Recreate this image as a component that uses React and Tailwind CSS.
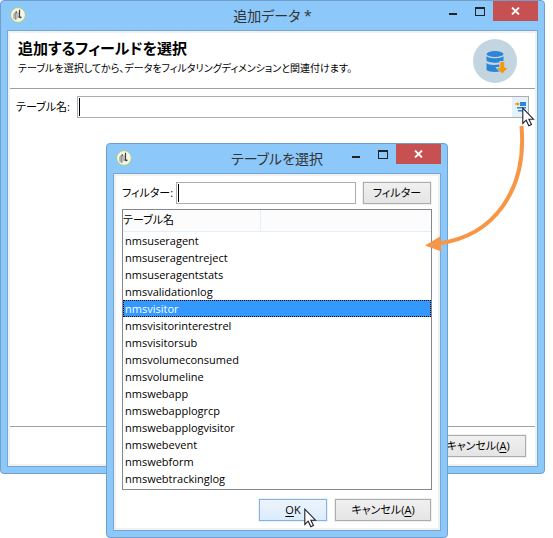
import React from "react";

const tables = [
  "nmsuseragent",
  "nmsuseragentreject",
  "nmsuseragentstats",
  "nmsvalidationlog",
  "nmsvisitor",
  "nmsvisitorinterestrel",
  "nmsvisitorsub",
  "nmsvolumeconsumed",
  "nmsvolumeline",
  "nmswebapp",
  "nmswebapplogrcp",
  "nmswebapplogvisitor",
  "nmswebevent",
  "nmswebform",
  "nmswebtrackinglog",
];

function AppIcon() {
  return (
    <svg width="16" height="16" viewBox="0 0 16 16" aria-hidden="true">
      <circle cx="8" cy="8" r="7.4" fill="#f4f6ef" stroke="#a5cf72" strokeWidth="1" />
      <path d="M3.2 7 5.400 4.400v8.400l-2.200-1.200Z" fill="#b0b0aa" />
      <path d="M5.400 4.400 7 4v2l-.6.8v6l-1 .2Z" fill="#6a6a66" />
      <path d="M6.600 7c.4-1.400 1.200-2 2.100-2v5.800l-2.100 1Z" fill="#bdbdb7" />
      <path d="M8.900 2.800h1.200v6.600l2 .5-1.900 1.700-2-1.700.7-.6Z" fill="#3d3d3b" />
    </svg>
  );
}

function Cursor() {
  return (
    <svg width="13" height="20" viewBox="0 0 13 20" aria-hidden="true">
      <path
        d="M.8 1.200v15.200l3.400-3.200 2.600 5.600 2.700-1.200-2.600-5.400h4.600Z"
        fill="#fff"
        stroke="#20202c"
        strokeWidth="1.100"
      />
    </svg>
  );
}

function TitleBar({ title }) {
  return (
    <header className="grid h-[29px] grid-cols-[110px_1fr_110px]">
      <div className="pt-[6px] pl-[9px]">
        <AppIcon />
      </div>
      <h1 className="pt-1 text-center text-[14px] leading-[22px] text-[#333]">{title}</h1>
      <div className="flex h-5 justify-end pr-[6px]">
        <button aria-label="最小化" className="flex w-[27px] items-center justify-center">
          <svg width="8" height="10" viewBox="0 0 8 10"><path d="M0 7h8v2H0Z" fill="#222" /></svg>
        </button>
        <button aria-label="最大化" className="flex w-[27px] items-center justify-center">
          <svg width="10" height="9" viewBox="0 0 10 9"><path d="M0 0h10v9H0ZM1 2v6h8V2Z" fill="#222" fillRule="evenodd" /></svg>
        </button>
        <button aria-label="閉じる" className="flex w-[45px] items-center justify-center bg-[#c75050]">
          <svg width="9" height="8" viewBox="0 0 9 8"><path d="m1 .5 7 7m0-7-7 7" stroke="#fff" strokeWidth="1.800" /></svg>
        </button>
      </div>
    </header>
  );
}

function WindowFrame({ title, children }) {
  return (
    <section className="rounded-[4px] border border-[#6f9fcb] bg-[#8dc8fb]">
      <TitleBar title={title} />
      <div className="mx-[6px] mb-[6px] border border-[#76a7d6] bg-[#f0f0f0] p-[2px]">
        <div className="bg-white">{children}</div>
      </div>
    </section>
  );
}

function TextField({ id, children }) {
  return (
    <div className="relative flex h-[22px] min-w-0 flex-1 border border-[#abadb3] bg-white">
      <input id={id} type="text" className="w-full min-w-0 px-1 outline-none" />
      <span className="absolute top-px left-px h-[18px] w-px bg-black" />
      {children}
    </div>
  );
}

function Button({ className = "", primary, children }) {
  const tone = primary
    ? "border-[#7eb4ea] bg-linear-to-b from-[#ecf4fc] to-[#dcecfc]"
    : "border-[#acacac] bg-linear-to-b from-[#f0f0f0] to-[#e5e5e5]";
  return (
    <button className={`h-[22px] border text-center text-[11px] leading-5 ring-1 ring-[#f0f0f0] ${tone} ${className}`}>
      {children}
    </button>
  );
}

function Cancel() {
  return (
    <Button className="w-24">
      キャンセル(<span className="underline underline-offset-2">A</span>)
    </Button>
  );
}

function DatabaseIcon() {
  return (
    <svg width="44" height="44" viewBox="0 0 44 44" aria-hidden="true">
      <circle cx="22" cy="22" r="22" fill="#c3d5e1" />
      <ellipse cx="22" cy="15" rx="8.500" ry="3" fill="#2d86d5" />
      <path d="M13.500 17c2 3 15 3 17 0v4.500c-2 3-15 3-17 0Z" fill="#2d86d5" />
      <path d="M13.500 24c2 2.600 12 2.600 17 0v7c-2 2.600-15 2.600-17 0Z" fill="#2d86d5" />
      <path d="M26.800 22.500h5v6h3.700l-6.200 6.500-6.200-6.500h3.700Z" fill="#f39a0b" stroke="#c3d5e1" strokeWidth="1" />
    </svg>
  );
}

function FieldWindow() {
  return (
    <WindowFrame title="追加データ *">
      <div className="flex h-14 justify-between border-b border-[#a0a0a0] pr-[18px] pl-2">
        <div className="pt-[5px]">
          <h2 className="text-[15px] leading-5 font-bold">追加するフィールドを選択</h2>
          <p className="text-[10px] leading-5 whitespace-nowrap">
            テーブルを選択してから、データをフィルタリングディメンションと関連付けます。
          </p>
        </div>
        <div className="pt-[6px]">
          <DatabaseIcon />
        </div>
      </div>
      <div className="flex items-center gap-[6px] pt-[7px] pr-[6px] pl-[6px]">
        <label htmlFor="table-name" className="w-[55px] text-[11px] leading-5 whitespace-nowrap">テーブル名:</label>
        <TextField id="table-name">
          <button aria-label="テーブルを参照" className="flex w-4 shrink-0 justify-center bg-[#e5f1fb] pt-[5px]">
            <svg width="11" height="10" viewBox="0 0 11 10">
              <path d="M5 0h6v4H5ZM2 5h9v1.500H2ZM3 8h8v1.500H3Z" fill="#2d86d5" />
              <path d="M0 1.200h2V0l3 2-3 2V2.800H0Z" fill="#f39a0b" />
            </svg>
          </button>
        </TextField>
      </div>
      <div className="h-[308px]" />
      <footer className="flex justify-end border-t border-[#a0a0a0] pt-2 pr-[9px] pb-[7px]">
        <Cancel />
      </footer>
    </WindowFrame>
  );
}

function TableDialog() {
  return (
    <WindowFrame title="テーブルを選択">
      <div className="px-[6px] pt-[6px] pb-[7px]">
        <div className="flex items-center gap-[7px] pr-px">
          <label htmlFor="filter" className="w-[47px] text-[11px] leading-5 whitespace-nowrap">フィルター:</label>
          <TextField id="filter" />
          <Button className="w-[68px]">フィルター</Button>
        </div>
        <div className="mt-[5px] h-[281px] border border-[#828790]">
          <table className="w-full table-fixed border-collapse">
            <thead>
              <tr className="h-[21px] border-b border-[#e5effc] bg-[#fcfcfd] text-left">
                <th className="w-[137px] border-r border-[#e5effc] p-0 text-[11px] leading-5 font-normal">テーブル名</th>
                <th className="p-0" aria-label="空の列" />
              </tr>
            </thead>
            <tbody>
              {tables.map((name) => (
                <tr
                  key={name}
                  className={name === "nmsvisitor" ? "bg-[#3399ff] text-white outline outline-dotted -outline-offset-1 outline-black" : ""}
                >
                  <td colSpan={2} className="h-[17px] p-0 pl-[2px] text-[11px] leading-[17px]">{name}</td>
                </tr>
              ))}
            </tbody>
          </table>
        </div>
        <div className="mt-[9px] flex justify-end gap-2 pr-px">
          <Button primary className="w-[68px]">
            <span className="underline underline-offset-2">O</span>K
          </Button>
          <Cancel />
        </div>
      </div>
    </WindowFrame>
  );
}

export default function App() {
  return (
    <main
      className="relative min-h-[538px] bg-white pr-2 text-black"
      style={{ fontFamily: '"Open Sans", "Noto Sans CJK JP", sans-serif', fontFeatureSettings: '"palt"' }}
    >
      <FieldWindow />
      <div className="absolute top-[143px] left-[106px] w-[342px]">
        <TableDialog />
      </div>
      <svg className="pointer-events-none absolute top-[124px] left-[420px]" width="110" height="132" viewBox="0 0 110 132" aria-hidden="true">
        <path d="M101.500 2C107 65 75 112 18 119.500" fill="none" stroke="#f79646" strokeWidth="4" />
        <path d="M5 121.500 20 112.500 21.500 127.500Z" fill="#f79646" />
      </svg>
      <div className="pointer-events-none absolute top-[107px] left-[522px]"><Cursor /></div>
      <div className="pointer-events-none absolute top-[508px] left-[304px]"><Cursor /></div>
    </main>
  );
}
